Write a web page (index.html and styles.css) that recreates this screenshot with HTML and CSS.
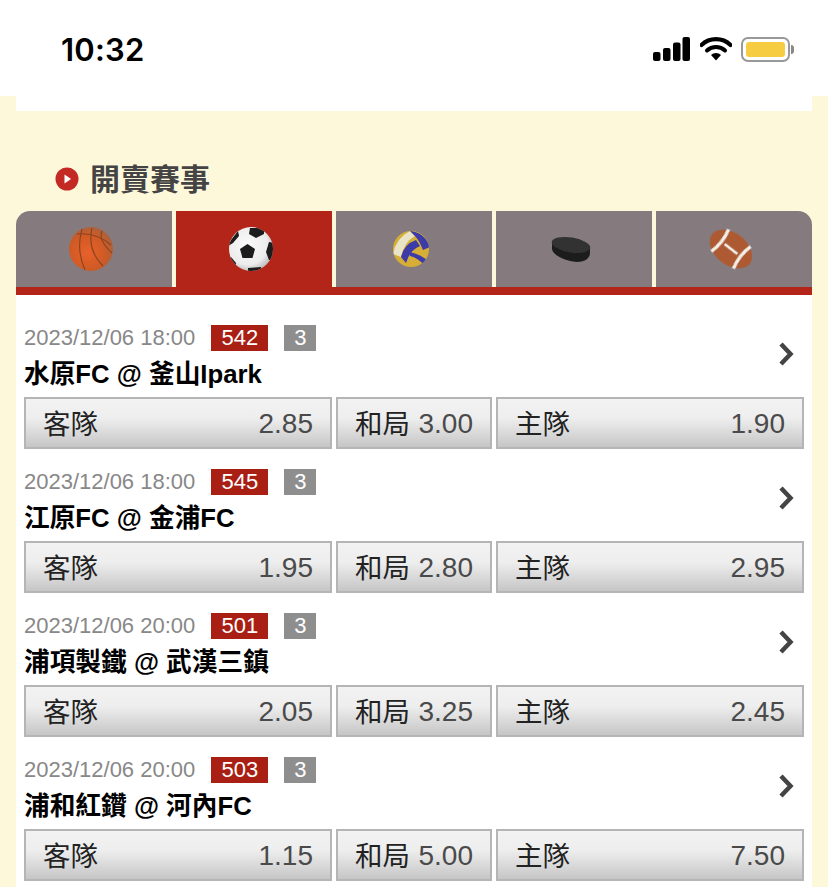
FILE: index.html
```html
<!DOCTYPE html>
<html lang="zh-Hant">

<head>
    <meta charset="UTF-8">
    <meta name="viewport" content="width=device-width, initial-scale=1.0">
    <title>開賣賽事</title>
    <link rel="stylesheet" href="styles.css">
</head>

<body>
    <div class="status-bar">
        <span class="clock">10:32</span>
        <div class="status-icons">
            <svg width="38" height="24" viewBox="0 0 38 24">
                <rect x="0" y="15" width="7.5" height="9" rx="2" fill="#000" />
                <rect x="10" y="11" width="7.5" height="13" rx="2" fill="#000" />
                <rect x="20" y="5.500" width="7.5" height="18.500" rx="2" fill="#000" />
                <rect x="29.500" y="0" width="7.500" height="24" rx="2" fill="#000" />
            </svg>
            <svg width="32" height="24" viewBox="0 0 32 24">
                <path d="M1.500 8 A21 21 0 0 1 30.500 8" fill="none" stroke="#000" stroke-width="4.200" stroke-linecap="round" />
                <path d="M7 13.500 A13 13 0 0 1 25 13.500" fill="none" stroke="#000" stroke-width="4" stroke-linecap="round" />
                <path d="M11 18 L16 23.500 L21 18 A7 7 0 0 0 11 18 Z" fill="#000" />
            </svg>
            <div class="battery">
                <div class="battery-fill"></div>
            </div>
            <div class="battery-cap"></div>
        </div>
    </div>

    <div class="main">
        <div class="top-strip"></div>

        <h2 class="section-title">
            <svg class="title-icon" width="24" height="24" viewBox="0 0 24 24">
                <circle cx="12" cy="12" r="11.500" fill="#c42a24" />
                <path d="M9.500 7.500 L16 12 L9.500 16.500 Z" fill="#fff" />
            </svg>
            開賣賽事
        </h2>

        <div class="tabs">
            <div class="tab">
                <svg class="emoji" width="46" height="46" viewBox="0 0 46 46">
                    <defs>
                        <radialGradient id="bb" cx="42%" cy="58%" r="62%">
                            <stop offset="0" stop-color="#e9602a" />
                            <stop offset="0.65" stop-color="#cf5a26" />
                            <stop offset="1" stop-color="#a8623c" />
                        </radialGradient>
                        <filter id="soft" x="-10%" y="-10%" width="120%" height="120%">
                            <feGaussianBlur stdDeviation="0.5" />
                        </filter>
                    </defs>
                    <g filter="url(#soft)">
                        <circle cx="23" cy="23" r="22" fill="url(#bb)" />
                        <g fill="none" stroke="#8a4320" stroke-width="1.100">
                            <path d="M9 8 Q28 6 43 19" />
                            <path d="M14 3 Q8 24 17 44" />
                            <path d="M24 2 Q19 24 35 40" />
                            <path d="M34 5 Q30 14 44 27" />
                        </g>
                    </g>
                </svg>
            </div>
            <div class="tab active">
                <svg class="emoji" width="46" height="46" viewBox="0 0 46 46">
                    <defs>
                        <radialGradient id="sb" cx="42%" cy="40%" r="65%">
                            <stop offset="0" stop-color="#fafafa" />
                            <stop offset="0.7" stop-color="#ececec" />
                            <stop offset="1" stop-color="#b5b5b5" />
                        </radialGradient>
                        <clipPath id="sb-clip">
                            <circle cx="23" cy="23" r="22" />
                        </clipPath>
                    </defs>
                    <g filter="url(#soft)">
                        <circle cx="23" cy="23" r="22" fill="url(#sb)" />
                        <g clip-path="url(#sb-clip)" fill="#1a1a1a">
                            <path d="M19.500 18 L27 23 L24.500 32 L14.500 32 L12 23 Z" />
                            <path d="M22 2 L36 2 L36 8 L28 12 L21 8 Z" />
                            <path d="M0 20 L3 14 L10 5 L11 10 L5 17 Z" />
                            <path d="M41 16 L46 17 L46 34 L41 34 L38 26 Z" />
                            <path d="M20 42 L33 41 L34 46 L20 46 Z" />
                            <path d="M3 31 L8 37 L7 42 L1 36 Z" />
                        </g>
                    </g>
                </svg>
            </div>
            <div class="tab">
                <svg class="emoji" width="38" height="38" viewBox="0 0 38 38">
                    <defs>
                        <clipPath id="vb-clip">
                            <circle cx="19" cy="19" r="18" />
                        </clipPath>
                    </defs>
                    <g filter="url(#soft)" clip-path="url(#vb-clip)">
                        <rect width="38" height="38" fill="#d6ad35" />
                        <path d="M1 24 Q4 8 18 1 L23 6 Q12 12 9 27 Z" fill="#e9e4c8" />
                        <path d="M18 1 Q32 2 38 17 L31 20 Q27 10 23 6 Z" fill="#3d3aa8" />
                        <path d="M9 27 Q12 14 24 10 L28 16 Q18 20 14 33 Z" fill="#3d3aa8" />
                        <path d="M18 22 Q28 24 36 31 L32 35 Q26 28 18 26 Z" fill="#3d3aa8" />
                    </g>
                </svg>
            </div>
            <div class="tab">
                <svg class="emoji" width="42" height="28" viewBox="0 0 42 28">
                    <g filter="url(#soft)">
                        <path d="M2 7 L2 14 C3 20 14 26 27 27 C35 27 40 23 40 18 L40 12 Z" fill="#1c1c1e" />
                        <ellipse cx="21" cy="10" rx="19.500" ry="7.500" transform="rotate(9 21 10)" fill="#303033" />
                    </g>
                </svg>
            </div>
            <div class="tab">
                <svg class="emoji" width="46" height="42" viewBox="0 0 46 42">
                    <g filter="url(#soft)" transform="rotate(38 23 21)">
                        <ellipse cx="23" cy="21" rx="24" ry="16" fill="#ad5a30" />
                        <path d="M9 7 Q13 21 9 35 M37 7 Q33 21 37 35" fill="none" stroke="#f4efe8" stroke-width="3.200" />
                        <path d="M15 21 H31" stroke="#f4efe8" stroke-width="2.500" />
                    </g>
                </svg>
            </div>
        </div>

        <div class="match-list">
            <div class="match">
                <div class="match-head">
                    <div class="match-info">
                        <div class="meta">
                            <span class="date">2023/12/06 18:00</span>
                            <span class="badge code">542</span>
                            <span class="badge count">3</span>
                        </div>
                        <div class="teams">水原FC @ 釜山Ipark</div>
                    </div>
                    <svg class="chevron" width="16" height="26" viewBox="0 0 16 26"><path d="M3 3 L12.500 13 L3 23" /></svg>
                </div>
                <div class="odds">
                    <div class="odd"><span class="label">客隊</span><span class="value">2.85</span></div>
                    <div class="odd"><span class="label">和局</span><span class="value">3.00</span></div>
                    <div class="odd"><span class="label">主隊</span><span class="value">1.90</span></div>
                </div>
            </div>

            <div class="match">
                <div class="match-head">
                    <div class="match-info">
                        <div class="meta">
                            <span class="date">2023/12/06 18:00</span>
                            <span class="badge code">545</span>
                            <span class="badge count">3</span>
                        </div>
                        <div class="teams">江原FC @ 金浦FC</div>
                    </div>
                    <svg class="chevron" width="16" height="26" viewBox="0 0 16 26"><path d="M3 3 L12.500 13 L3 23" /></svg>
                </div>
                <div class="odds">
                    <div class="odd"><span class="label">客隊</span><span class="value">1.95</span></div>
                    <div class="odd"><span class="label">和局</span><span class="value">2.80</span></div>
                    <div class="odd"><span class="label">主隊</span><span class="value">2.95</span></div>
                </div>
            </div>

            <div class="match">
                <div class="match-head">
                    <div class="match-info">
                        <div class="meta">
                            <span class="date">2023/12/06 20:00</span>
                            <span class="badge code">501</span>
                            <span class="badge count">3</span>
                        </div>
                        <div class="teams">浦項製鐵 @ 武漢三鎮</div>
                    </div>
                    <svg class="chevron" width="16" height="26" viewBox="0 0 16 26"><path d="M3 3 L12.500 13 L3 23" /></svg>
                </div>
                <div class="odds">
                    <div class="odd"><span class="label">客隊</span><span class="value">2.05</span></div>
                    <div class="odd"><span class="label">和局</span><span class="value">3.25</span></div>
                    <div class="odd"><span class="label">主隊</span><span class="value">2.45</span></div>
                </div>
            </div>

            <div class="match">
                <div class="match-head">
                    <div class="match-info">
                        <div class="meta">
                            <span class="date">2023/12/06 20:00</span>
                            <span class="badge code">503</span>
                            <span class="badge count">3</span>
                        </div>
                        <div class="teams">浦和紅鑽 @ 河內FC</div>
                    </div>
                    <svg class="chevron" width="16" height="26" viewBox="0 0 16 26"><path d="M3 3 L12.500 13 L3 23" /></svg>
                </div>
                <div class="odds">
                    <div class="odd"><span class="label">客隊</span><span class="value">1.15</span></div>
                    <div class="odd"><span class="label">和局</span><span class="value">5.00</span></div>
                    <div class="odd"><span class="label">主隊</span><span class="value">7.50</span></div>
                </div>
            </div>
        </div>
    </div>
</body>

</html>
```

FILE: styles.css
```css
* {
    box-sizing: border-box;
}

html,
body {
    height: 100%;
}

body {
    margin: 0;
    overflow: hidden;
    background-color: #fef8da;
    font-family: "Liberation Sans", "Noto Sans CJK TC", sans-serif;
}

.status-bar {
    display: flex;
    justify-content: space-between;
    align-items: center;
    height: 96px;
    padding: 2px 34px 0 61px;
    background-color: white;
}

.clock {
    font-family: Inter, sans-serif;
    font-size: 31px;
    font-weight: 600;
    letter-spacing: 0.2px;
    color: black;
}

.status-icons {
    display: flex;
    align-items: center;
}

.status-icons svg {
    margin-right: 9px;
}

.battery {
    width: 49px;
    height: 25px;
    padding: 3px;
    border: 2px solid #999;
    border-radius: 7px;
    background-color: white;
}

.battery-fill {
    height: 100%;
    background-color: #f6cd42;
    border-radius: 3px;
}

.battery-cap {
    width: 3px;
    height: 9px;
    margin-left: 1px;
    background-color: #888;
    border-radius: 0 3px 3px 0;
}

.main {
    padding: 0 16px;
}

.top-strip {
    height: 15px;
    background-color: white;
}

.section-title {
    display: flex;
    align-items: center;
    gap: 11px;
    height: 100px;
    margin: 0;
    padding: 32px 0 0 39px;
    font-size: 30px;
    font-weight: 700;
    color: #444;
}

.title-icon {
    margin-top: 4px;
}

.tabs {
    display: grid;
    grid-template-columns: repeat(5, 1fr);
    gap: 4px;
    border-bottom: 8px solid #b32518;
    border-radius: 14px 14px 0 0;
    overflow: hidden;
}

.tab {
    display: flex;
    justify-content: center;
    align-items: center;
    height: 76px;
    padding-right: 6px;
    background-color: #857b7f;
}

.tab.active {
    background-color: #b32518;
}

.match-list {
    padding: 10px 8px 20px;
    background-color: white;
}

.match {
    padding-top: 20px;
}

.match-head {
    display: flex;
    justify-content: space-between;
    align-items: flex-start;
    padding-right: 10px;
}

.meta {
    display: flex;
    align-items: center;
    height: 26px;
}

.date {
    font-size: 22px;
    color: #888;
    margin-right: 16px;
}

.badge {
    height: 26px;
    line-height: 26px;
    text-align: center;
    font-size: 22px;
    color: white;
}

.code {
    width: 57px;
    margin-right: 16px;
    background-color: #a91f14;
}

.count {
    width: 32px;
    background-color: #8e8e8e;
}

.teams {
    height: 46px;
    line-height: 46px;
    font-size: 25.7px;
    font-weight: 700;
    color: black;
}

.chevron {
    margin-top: 16px;
    fill: none;
    stroke: #444;
    stroke-width: 4.5;
}

.odds {
    display: grid;
    grid-template-columns: 308px 156px 308px;
    gap: 4px;
}

.odd {
    display: flex;
    justify-content: space-between;
    align-items: center;
    height: 52px;
    padding: 0 17px;
    border: 2px solid #b5b5b5;
    background: linear-gradient(#f2f2f2 0%, #eeeeee 40%, #c6c6c6 100%);
    font-size: 28px;
}

.label {
    margin-top: -2px;
    font-size: 27.5px;
    color: #222;
}

.value {
    margin-top: 1px;
    color: #4a4a4a;
}
```
